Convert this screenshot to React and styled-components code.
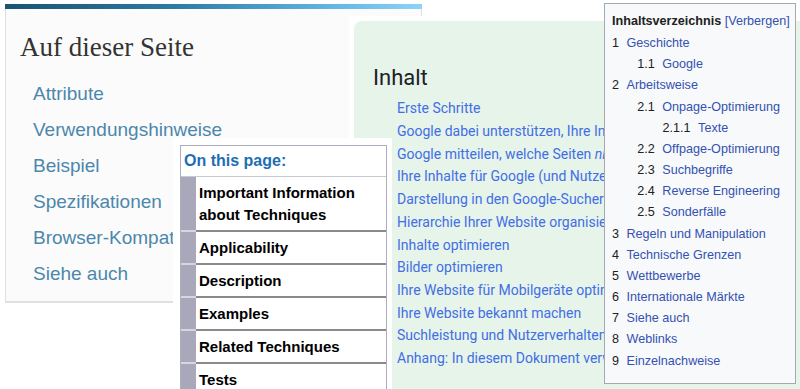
import React from "react";
import styled, { createGlobalStyle } from "styled-components";

const Global = createGlobalStyle`
  html, body { margin: 0; padding: 0; background: #fff; }
  body { font-family: "Liberation Sans", Arial, sans-serif; }
`;

const Canvas = styled.div`
  position: relative;
  width: 800px;
  height: 389px;
  overflow: hidden;
  background: #fff;
`;

const Window = styled.section`
  position: absolute;
  left: ${(p) => p.$x}px;
  top: ${(p) => p.$y}px;
  width: ${(p) => p.$w}px;
  height: ${(p) => p.$h}px;
  z-index: ${(p) => p.$z};
  box-sizing: border-box;
`;

/* ---------- Panel 1: MDN style ---------- */
const MdnCard = styled(Window)`
  display: flex;
  flex-direction: column;
  background: #fbfbfb;
  border: 1px solid #dde1e4;
  border-top: none;
  border-bottom-width: 2px;
`;
const GradientBar = styled.div`
  height: 5px;
  margin: 0 -1px;
  background: linear-gradient(90deg, #1a5470 0%, #2c7aa2 40%, #5db1df 75%, #8dd3f7 100%);
`;
const MdnBody = styled.div`
  padding: 22px 0 0 14px;
`;
const MdnTitle = styled.h2`
  margin: 0;
  font-family: "Liberation Serif", "Times New Roman", serif;
  font-weight: 400;
  font-size: 27px;
  line-height: 32px;
  color: #333;
  white-space: nowrap;
`;
const MdnList = styled.ul`
  list-style: none;
  margin: 13px 0 0;
  padding: 0 0 0 13px;
`;
const MdnItem = styled.li`
  font-family: "Liberation Sans", Arial, sans-serif;
  font-size: 19px;
  line-height: 36px;
  color: #4c87ab;
  white-space: nowrap;
`;

/* ---------- Panel 2: Google style ---------- */
const GoogleFrame = styled(Window)`
  background: #fff;
  padding: 5px;
`;
const GreenBox = styled.div`
  height: 100%;
  box-sizing: border-box;
  background: #e6f4ea;
  border-radius: 8px;
  padding: 42.5px 0 0 19px;
`;
const GoogleHeading = styled.h2`
  margin: 0;
  font-family: Roboto, "Liberation Sans", sans-serif;
  font-weight: 400;
  font-size: 22px;
  line-height: 28px;
  color: #202124;
`;
const GoogleList = styled.ul`
  list-style: none;
  margin: 5.8px 0 0;
  padding: 0 0 0 24px;
  width: 207px;
  overflow: hidden;
`;
const GoogleLink = styled.li`
  font-family: Roboto, "Liberation Sans", sans-serif;
  font-size: 14px;
  line-height: 22.7px;
  color: #426ee6;
  white-space: nowrap;
`;

/* ---------- Panel 3: W3C style ---------- */
const W3cFrame = styled(Window)`
  background: #fff;
  padding: 7px 0 0 7px;
`;
const W3cBox = styled.nav`
  width: 207px;
  box-sizing: border-box;
  border: 1px solid #aeadc0;
  background: #fff;
  font-family: "Liberation Sans", Arial, sans-serif;
`;
const W3cHeader = styled.div`
  padding: 4px 4px 4px 3px;
  border-bottom: 1px solid #c9c9d1;
  font-weight: 700;
  font-size: 16px;
  line-height: 22px;
  color: #1e6eb3;
`;
const W3cRow = styled.div`
  display: flex;
`;
const Stripe = styled.div`
  width: 15px;
  flex: none;
  background: #a9a8bb;
  border-bottom: 2px solid #d6d6de;
`;
const W3cText = styled.div`
  flex: 1;
  padding: 4.5px 4px 4.5px 3px;
  border-bottom: 2px solid #8a8a8a;
  font-weight: 700;
  font-size: 15px;
  line-height: 22px;
  color: #000;
`;

/* ---------- Panel 4: Wikipedia TOC ---------- */
const WikiToc = styled(Window)`
  background: #f8f9fa;
  border: 1px solid #a2a9b1;
  padding: 7px 7px 6px;
  font-family: "Liberation Sans", Arial, sans-serif;
  font-size: 12.6px;
  line-height: 21.16px;
  color: #202122;
`;
const TocTitle = styled.div`
  white-space: nowrap;
`;
const TocTitleText = styled.b`
  font-weight: 700;
`;
const TocToggle = styled.span`
  color: #3451b2;
`;
const TocList = styled.ul`
  list-style: none;
  margin: 1px 0 0;
  padding: 0;
`;
const TocItem = styled.li`
  display: flex;
  white-space: nowrap;
  padding-left: ${(p) => (p.$level - 1) * 25.3}px;
`;
const TocNum = styled.span`
  margin-right: 7.5px;
  color: #202122;
`;
const TocText = styled.span`
  color: #3451b2;
`;

const mdnItems = [
  "Attribute",
  "Verwendungshinweise",
  "Beispiel",
  "Spezifikationen",
  "Browser-Kompatibilität",
  "Siehe auch",
];

const googleItems = [
  "Erste Schritte",
  "Google dabei unterstützen, Ihre Inhalte zu finden",
  <>
    Google mitteilen, welche Seiten <i>nicht</i> gecrawlt werden sollen
  </>,
  "Ihre Inhalte für Google (und Nutzer) verständlich machen",
  "Darstellung in den Google-Suchergebnissen verwalten",
  "Hierarchie Ihrer Website organisieren",
  "Inhalte optimieren",
  "Bilder optimieren",
  "Ihre Website für Mobilgeräte optimieren",
  "Ihre Website bekannt machen",
  "Suchleistung und Nutzerverhalten analysieren",
  "Anhang: In diesem Dokument verwendete Begriffe",
];

const w3cItems = [
  <>
    Important Information
    <br />
    about Techniques
  </>,
  "Applicability",
  "Description",
  "Examples",
  "Related Techniques",
  "Tests",
];

const tocItems = [
  ["1", "Geschichte", 1],
  ["1.1", "Google", 2],
  ["2", "Arbeitsweise", 1],
  ["2.1", "Onpage-Optimierung", 2],
  ["2.1.1", "Texte", 3],
  ["2.2", "Offpage-Optimierung", 2],
  ["2.3", "Suchbegriffe", 2],
  ["2.4", "Reverse Engineering", 2],
  ["2.5", "Sonderfälle", 2],
  ["3", "Regeln und Manipulation", 1],
  ["4", "Technische Grenzen", 1],
  ["5", "Wettbewerbe", 1],
  ["6", "Internationale Märkte", 1],
  ["7", "Siehe auch", 1],
  ["8", "Weblinks", 1],
  ["9", "Einzelnachweise", 1],
];

export default function App() {
  return (
    <>
      <Global />
      <Canvas>
        <MdnCard $x={5} $y={4} $w={417} $h={299} $z={1}>
          <GradientBar />
          <MdnBody>
            <MdnTitle>Auf dieser Seite</MdnTitle>
            <MdnList>
              {mdnItems.map((t) => (
                <MdnItem key={t}>{t}</MdnItem>
              ))}
            </MdnList>
          </MdnBody>
        </MdnCard>

        <GoogleFrame $x={349} $y={16} $w={470} $h={385} $z={2}>
          <GreenBox>
            <GoogleHeading>Inhalt</GoogleHeading>
            <GoogleList>
              {googleItems.map((t, i) => (
                <GoogleLink key={i}>{t}</GoogleLink>
              ))}
            </GoogleList>
          </GreenBox>
        </GoogleFrame>

        <W3cFrame $x={173} $y={138} $w={219} $h={260} $z={3}>
          <W3cBox>
            <W3cHeader>On this page:</W3cHeader>
            {w3cItems.map((t, i) => (
              <W3cRow key={i}>
                <Stripe />
                <W3cText>{t}</W3cText>
              </W3cRow>
            ))}
          </W3cBox>
        </W3cFrame>

        <WikiToc $x={604} $y={3} $w={192} $h={381} $z={4}>
          <TocTitle>
            <TocTitleText>Inhaltsverzeichnis</TocTitleText>{" "}
            <TocToggle>[Verbergen]</TocToggle>
          </TocTitle>
          <TocList>
            {tocItems.map(([n, t, l]) => (
              <TocItem key={n} $level={l}>
                <TocNum>{n}</TocNum>
                <TocText>{t}</TocText>
              </TocItem>
            ))}
          </TocList>
        </WikiToc>
      </Canvas>
    </>
  );
}
